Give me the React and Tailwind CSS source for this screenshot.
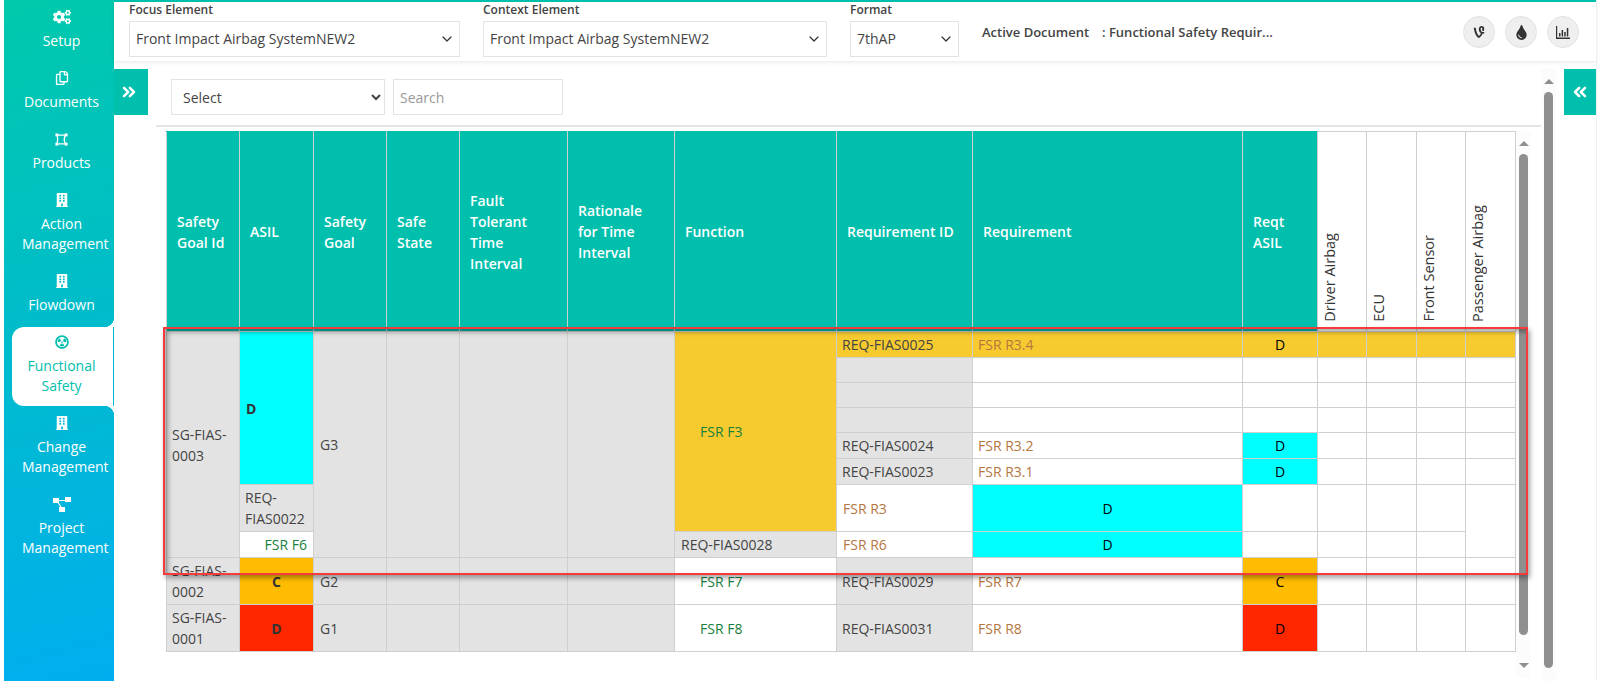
import { ChevronDown, ChevronsLeft, ChevronsRight } from 'lucide-react';
import { FaBuilding, FaCogs, FaRadiationAlt, FaRegCopy, FaTint, FaVine } from 'react-icons/fa';

const ProductIcon = () => (
  <svg width="13" height="13" viewBox="0 0 18 18" fill="none" stroke="currentColor" strokeWidth="1.8">
    <path d="M3 3h12c-3 3-3 9 0 12H3c1-4 1-8 0-12z" />
    <rect x="0.6" y="0.6" width="4" height="4" fill="currentColor" stroke="none" />
    <rect x="13.4" y="0.6" width="4" height="4" fill="currentColor" stroke="none" />
    <rect x="0.6" y="13.4" width="4" height="4" fill="currentColor" stroke="none" />
    <rect x="13.4" y="13.4" width="4" height="4" fill="currentColor" stroke="none" />
  </svg>
);

const ProjectIcon = () => (
  <svg width="18" height="15" viewBox="0 0 18 15" fill="currentColor">
    <rect x="0" y="1" width="6" height="5" />
    <rect x="12" y="0" width="6" height="5" />
    <rect x="6" y="10" width="6" height="5" />
    <path d="M5 3h8v1H5zM4 5l1-.5 4 6-1 .5z" />
  </svg>
);

const ChartIcon = () => (
  <svg width="14" height="13" viewBox="0 0 14 13" fill="currentColor">
    <path d="M0 0h1.2v11.6H14V13H0z" />
    <rect x="3" y="7" width="1.5" height="3.5" />
    <rect x="5.6" y="4" width="1.5" height="6.5" />
    <rect x="8.2" y="6" width="1.5" height="4.5" />
    <rect x="10.8" y="2" width="1.5" height="8.5" />
  </svg>
);

const navItems = [
  { label: 'Setup', icon: <FaCogs size={18} /> },
  { label: 'Documents', icon: <FaRegCopy size={14} /> },
  { label: 'Products', icon: <ProductIcon /> },
  { label: 'Action Management', icon: <FaBuilding size={14} /> },
  { label: 'Flowdown', icon: <FaBuilding size={14} />, cornerBottom: true },
  { label: 'Functional Safety', icon: <FaRadiationAlt size={14} />, active: true },
  { label: 'Change Management', icon: <FaBuilding size={14} />, cornerTop: true },
  { label: 'Project Management', icon: <ProjectIcon /> },
];

const Sidebar = () => (
  <aside className="w-[110px] ml-[4px] shrink-0 h-full bg-[linear-gradient(165deg,#00c9ab,#00aeef)] text-white text-sm leading-5">
    {navItems.map((item) =>
      item.active ? (
        <div key={item.label} className="mt-[2px] ml-[8px] mr-[1px] pl-[10px] pt-[6px] pb-[10px] bg-white rounded-l-[12px] text-[#00bfad]">
          <div className="w-[79px] h-[18px] flex items-center justify-center">{item.icon}</div>
          <div className="w-[79px] mt-[5px] text-center">{item.label}</div>
        </div>
      ) : (
        <div key={item.label} className="relative pl-[18px] pt-[8px] pb-[10px]">
          <div className="w-[79px] h-[18px] flex items-center justify-center">{item.icon}</div>
          <div className="w-[79px] mt-[5px] text-center">{item.label}</div>
          {item.cornerBottom && (
            <span className="absolute right-0 bottom-[-2px] w-[10px] h-[10px] bg-[radial-gradient(circle_at_top_left,transparent_10px,white_10.5px)]" />
          )}
          {item.cornerTop && (
            <span className="absolute right-0 top-0 w-[10px] h-[10px] bg-[radial-gradient(circle_at_bottom_left,transparent_10px,white_10.5px)]" />
          )}
        </div>
      )
    )}
  </aside>
);

const HeaderSelect = ({ label, value, width }) => (
  <div className={width}>
    <div className="text-xs font-semibold text-[#444] leading-4">{label}</div>
    <div className="mt-[3px] h-[36px] px-[6px] border border-[#e3e3e3] flex items-center justify-between text-sm text-[#444]">
      <span>{value}</span>
      <ChevronDown size={16} strokeWidth={1.8} className="mr-[-2px] text-[#333]" />
    </div>
  </div>
);

const RoundButton = ({ children }) => (
  <div className="w-[32px] h-[32px] rounded-full bg-[#efefef] border border-[#e2e2e2] flex items-center justify-center text-[#333]">
    {children}
  </div>
);

const Header = () => (
  <header className="h-[61px] shrink-0 border-t-2 border-[#00bfad] pl-[15px] pr-[17px] flex gap-[23px] bg-white shadow-[0_1px_4px_rgba(0,0,0,0.1)]">
    <HeaderSelect label="Focus Element" value="Front Impact Airbag SystemNEW2" width="w-[331px]" />
    <HeaderSelect label="Context Element" value="Front Impact Airbag SystemNEW2" width="w-[344px]" />
    <HeaderSelect label="Format" value="7thAP" width="w-[109px]" />
    <div className="mt-[20px] flex text-[13px] leading-5 font-semibold text-[#444] whitespace-nowrap">
      <span className="w-[120px]">Active Document</span>
      <span>: Functional Safety Requir...</span>
    </div>
    <div className="ml-auto mt-[14px] flex gap-[10px]">
      <RoundButton><FaVine size={14} /></RoundButton>
      <RoundButton><FaTint size={15} /></RoundButton>
      <RoundButton><ChartIcon /></RoundButton>
    </div>
  </header>
);

const Scrollbar = ({ height, thumbTop, thumbHeight }) => (
  <div className={`relative w-[15px] shrink-0 bg-[#fcfcfc] ${height}`}>
    <span className="absolute left-[3px] top-[10px] border-x-[5px] border-b-[5px] border-x-transparent border-b-[#8f8f8f]" />
    <div className={`absolute left-[3px] w-[9px] rounded-full bg-[#8f8f8f] ${thumbTop} ${thumbHeight}`} />
    <span className="absolute left-[3px] bottom-[10px] border-x-[5px] border-t-[5px] border-x-transparent border-t-[#8f8f8f]" />
  </div>
);

const cols = ['w-[73px]', 'w-[74px]', 'w-[73px]', 'w-[73px]', 'w-[108px]', 'w-[107px]', 'w-[162px]', 'w-[136px]', 'w-[270px]', 'w-[75px]', 'w-[49px]', 'w-[50px]', 'w-[49px]', 'w-[50px]'];

const Th = ({ children }) => (
  <th className="bg-[#00bfad] border border-[#cfcfcf] border-t-[#00bfad] px-[10px] text-left text-white font-semibold align-middle">{children}</th>
);

const VerticalTh = ({ children }) => (
  <th className="border border-[#cfcfcf] pl-[1px] pb-[4px] align-bottom text-left font-normal text-[14.5px] text-[#333]">
    <span className="inline-block [writing-mode:vertical-rl] rotate-180 whitespace-nowrap">{children}</span>
  </th>
);

const Td = ({ className = '', ...props }) => (
  <td className={`border border-[#cfcfcf] px-[6px] py-0 text-[#444] ${className}`} {...props} />
);

const Gray = ({ className = '', ...props }) => <Td className={`bg-[#e3e3e3] ${className}`} {...props} />;
const ReqId = ({ children, className = 'bg-[#e3e3e3]' }) => <Td className={`!pl-[5px] ${className}`}>{children}</Td>;
const Fn = ({ children, className = 'bg-white', ...props }) => (
  <Td className={`pl-[25px] !text-[#17803d] ${className}`} {...props}>{children}</Td>
);
const Req = ({ children, className = 'bg-white' }) => (
  <Td className={`!pl-[5px] !text-[#b5763f] ${className}`}>{children}</Td>
);
const Asil = ({ children, className }) => (
  <Td className={`text-center !text-black ${className}`}>{children}</Td>
);
const Blank = ({ className = 'bg-white', ...props }) => <Td className={className} {...props} />;

const Whites = () => (
  <>
    <Blank />
    <Blank />
    <Blank />
    <Blank />
  </>
);

const DataTable = () => (
  <table className="table-fixed border-collapse w-[1349px] text-sm leading-[21px]">
    <colgroup>
      {cols.map((c, i) => (
        <col key={i} className={c} />
      ))}
    </colgroup>
    <thead>
      <tr className="h-[200px]">
        <Th>Safety Goal Id</Th>
        <Th>ASIL</Th>
        <Th>Safety Goal</Th>
        <Th>Safe State</Th>
        <Th>Fault Tolerant Time Interval</Th>
        <Th>Rationale for Time Interval</Th>
        <Th>Function</Th>
        <Th>Requirement ID</Th>
        <Th>Requirement</Th>
        <Th>Reqt ASIL</Th>
        <VerticalTh>Driver Airbag</VerticalTh>
        <VerticalTh>ECU</VerticalTh>
        <VerticalTh>Front Sensor</VerticalTh>
        <VerticalTh>Passenger Airbag</VerticalTh>
      </tr>
    </thead>
    <tbody>
      <tr className="h-[26px]">
        <Gray rowSpan={8} className="!pl-[5px]">SG-FIAS-0003</Gray>
        <Td rowSpan={6} className="bg-[#00ffff] font-bold !text-[#333]">D</Td>
        <Gray rowSpan={8}>G3</Gray>
        <Gray rowSpan={8} />
        <Gray rowSpan={8} />
        <Gray rowSpan={8} />
        <Fn rowSpan={7} className="bg-[#f7cb2f]">FSR F3</Fn>
        <ReqId className="bg-[#f7cb2f]">REQ-FIAS0025</ReqId>
        <Req className="bg-[#f7cb2f]">FSR R3.4</Req>
        <Asil className="bg-[#f7cb2f]">D</Asil>
        <Blank className="bg-[#f7cb2f]" />
        <Blank className="bg-[#f7cb2f]" />
        <Blank className="bg-[#f7cb2f]" />
        <Blank className="bg-[#f7cb2f]" />
      </tr>
      {[0, 1, 2].map((i) => (
        <tr key={i} className="h-[25px]">
          <Gray />
          <Blank />
          <Blank />
          <Whites />
        </tr>
      ))}
      <tr className="h-[26px]">
        <ReqId>REQ-FIAS0024</ReqId>
        <Req>FSR R3.2</Req>
        <Asil className="bg-[#00ffff]">D</Asil>
        <Whites />
      </tr>
      <tr className="h-[26px]">
        <ReqId>REQ-FIAS0023</ReqId>
        <Req>FSR R3.1</Req>
        <Asil className="bg-[#00ffff]">D</Asil>
        <Whites />
      </tr>
      <tr className="h-[47px]">
        <ReqId>REQ-FIAS0022</ReqId>
        <Td className="bg-white !text-[#b5763f]">FSR R3</Td>
        <Asil className="bg-[#00ffff]">D</Asil>
        <Blank />
        <Blank />
        <Blank />
        <Blank />
        <Blank rowSpan={2} />
      </tr>
      <tr className="h-[26px]">
        <Td className="bg-white text-right !text-[#17803d]">FSR F6</Td>
        <Gray>REQ-FIAS0028</Gray>
        <Td className="bg-white !text-[#b5763f]">FSR R6</Td>
        <Asil className="bg-[#00ffff]">D</Asil>
        <Blank />
        <Blank />
        <Blank />
        <Blank />
      </tr>
      <tr className="h-[47px]">
        <Gray className="!pl-[5px]">SG-FIAS-0002</Gray>
        <Td className="bg-[#ffbc00] text-center font-bold !text-[#333]">C</Td>
        <Gray>G2</Gray>
        <Gray />
        <Gray />
        <Gray />
        <Fn>FSR F7</Fn>
        <ReqId>REQ-FIAS0029</ReqId>
        <Req>FSR R7</Req>
        <Asil className="bg-[#ffbc00]">C</Asil>
        <Whites />
      </tr>
      <tr className="h-[47px]">
        <Gray className="!pl-[5px]">SG-FIAS-0001</Gray>
        <Td className="bg-[#ff2600] text-center font-bold !text-[#333]">D</Td>
        <Gray>G1</Gray>
        <Gray />
        <Gray />
        <Gray />
        <Fn>FSR F8</Fn>
        <ReqId>REQ-FIAS0031</ReqId>
        <Req>FSR R8</Req>
        <Asil className="bg-[#ff2600]">D</Asil>
        <Whites />
      </tr>
    </tbody>
  </table>
);

export default function App() {
  return (
    <div className="w-[1600px] h-[681px] overflow-hidden flex bg-white font-['Open_Sans',sans-serif]">
      <Sidebar />
      <div className="w-[1482px] flex flex-col">
        <Header />
        <div className="flex-1 flex items-start min-h-0 pt-[8px]">
          <div className="w-[34px] h-[46px] shrink-0 bg-[#00bfad] text-white flex items-center justify-center pr-[4px]">
            <ChevronsRight size={20} strokeWidth={3} />
          </div>
          <main className="w-[1393px] shrink-0 pl-[8px]">
            <div className="h-[58px] pt-[10px] pl-[15px] flex gap-[8px] items-start border-b-2 border-[#e5e5e5]">
              <select className="w-[214px] h-[36px] pl-[7px] pr-[6px] border border-[#e3e3e3] bg-white text-sm text-[#444]">
                <option>Select</option>
              </select>
              <input placeholder="Search" className="w-[170px] h-[36px] px-[6px] border border-[#e3e3e3] text-sm placeholder:text-[#999]" />
            </div>
            <div className="relative mt-[4px] ml-[10px] flex items-start">
              <DataTable />
              <Scrollbar height="h-[547px]" thumbTop="top-[23px]" thumbHeight="h-[481px]" />
              <div className="absolute left-[-3px] top-[196px] w-[1365px] h-[248px] border-2 border-[#f53b3b] shadow-[2px_3px_5px_rgba(0,0,0,0.35),inset_4px_4px_5px_-1px_rgba(0,0,0,0.35)]" />
            </div>
          </main>
          <Scrollbar height="h-[640px]" thumbTop="top-[23px]" thumbHeight="h-[576px]" />
          <div className="ml-[8px] w-[32px] h-[46px] shrink-0 bg-[#00bfad] text-white flex items-center justify-center">
            <ChevronsLeft size={20} strokeWidth={3} />
          </div>
        </div>
      </div>
      <div className="flex-1 border-l border-[#f0f0f0]" />
    </div>
  );
}
